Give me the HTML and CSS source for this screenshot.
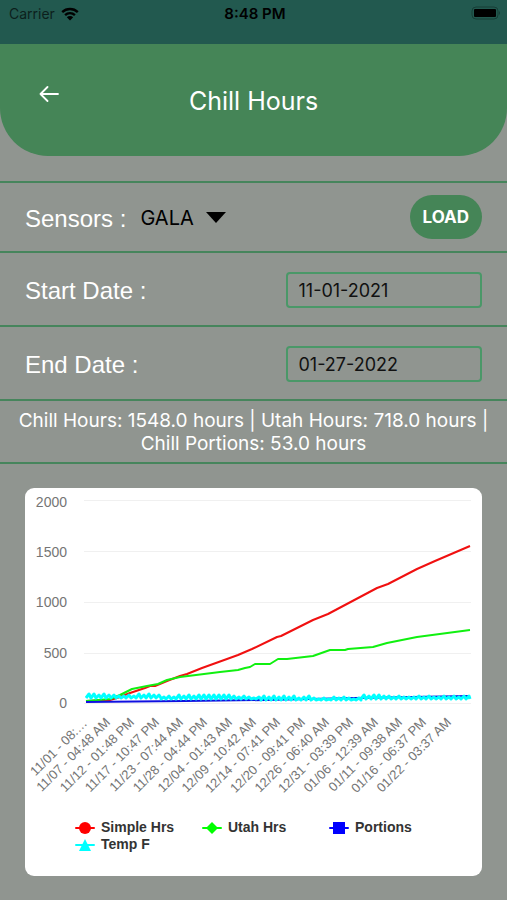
FILE: index.html
```html
<!DOCTYPE html>
<html lang="en">
<head>
<meta charset="utf-8">
<meta name="viewport" content="width=device-width, initial-scale=1">
<title>Chill Hours</title>
<link rel="stylesheet" href="styles.css">
</head>
<body>
<div class="status">
  <div class="status-left">
    <span>Carrier</span>
    <svg class="wifi" viewBox="0 0 18 14" aria-hidden="true">
      <path d="M1.2 5.1a11.3 11.3 0 0 1 15.6 0M4.1 8.1a7.1 7.1 0 0 1 9.8 0" fill="none" stroke="#000" stroke-width="2.4"/>
      <path d="M5.8 10.2a4.6 4.6 0 0 1 6.4 0L9 13.4z"/>
    </svg>
  </div>
  <strong class="status-time">8:48 PM</strong>
  <svg class="battery" viewBox="0 0 30 14" aria-hidden="true">
    <rect x="1" y="1" width="26" height="12" rx="4" fill="none" stroke="#163e37"/>
    <rect x="3" y="3" width="22" height="8" rx="1"/>
    <path d="M28 5q2 2 0 4z" fill="#163e37"/>
  </svg>
</div>
<header class="header">
  <button class="back" type="button" aria-label="Back">
    <svg viewBox="0 0 20 16" aria-hidden="true"><path d="M19 8H1.5M8.5 1 1.5 8l7 7" fill="none" stroke="#fff" stroke-width="1.8" stroke-linecap="round" stroke-linejoin="round"/></svg>
  </button>
  <h1>Chill Hours</h1>
</header>
<main>
  <form class="filters">
    <div class="row row-sensor">
      <label for="sensor">Sensors :</label>
      <div class="picker">
        <select id="sensor"><option>GALA</option></select>
        <svg class="caret" viewBox="0 0 20 11" aria-hidden="true"><path d="M0 0h20L10 11z"/></svg>
      </div>
      <button class="load" type="button">LOAD</button>
    </div>
    <div class="row">
      <label for="start">Start Date :</label>
      <input id="start" type="text" value="11-01-2021">
    </div>
    <div class="row">
      <label for="end">End Date :</label>
      <input id="end" type="text" value="01-27-2022">
    </div>
  </form>
  <p class="summary">Chill Hours: 1548.0 hours | Utah Hours: 718.0 hours | Chill Portions: 53.0 hours</p>
  <section class="card">
    <svg class="chart" viewBox="0 0 457 331" role="img" aria-label="Chill accumulation">
      <path class="grid" d="M59 12.5H446M59 63.5H446M59 114.5H446M59 165.5H446M59 215.5H446"/>
      <g class="y-labels">
        <text x="42" y="19">2000</text>
        <text x="42" y="69">1500</text>
        <text x="42" y="119">1000</text>
        <text x="42" y="170">500</text>
        <text x="42" y="220">0</text>
      </g>
      <g class="x-labels">
        <text transform="translate(63 236) rotate(-45)">11/01 - 08:…</text>
        <text transform="translate(86 235) rotate(-45)">11/07 - 04:48 AM</text>
        <text transform="translate(110 235) rotate(-45)">11/12 - 01:48 PM</text>
        <text transform="translate(135 235) rotate(-45)">11/17 - 10:47 PM</text>
        <text transform="translate(159 235) rotate(-45)">11/23 - 07:44 AM</text>
        <text transform="translate(183 235) rotate(-45)">11/28 - 04:44 PM</text>
        <text transform="translate(208 235) rotate(-45)">12/04 - 01:43 AM</text>
        <text transform="translate(232 235) rotate(-45)">12/09 - 10:42 AM</text>
        <text transform="translate(256 235) rotate(-45)">12/14 - 07:41 PM</text>
        <text transform="translate(281 235) rotate(-45)">12/20 - 09:41 PM</text>
        <text transform="translate(305 235) rotate(-45)">12/26 - 06:40 AM</text>
        <text transform="translate(329 235) rotate(-45)">12/31 - 03:39 PM</text>
        <text transform="translate(354 235) rotate(-45)">01/06 - 12:39 AM</text>
        <text transform="translate(378 235) rotate(-45)">01/11 - 09:38 AM</text>
        <text transform="translate(402 235) rotate(-45)">01/16 - 06:37 PM</text>
        <text transform="translate(427 235) rotate(-45)">01/22 - 03:37 AM</text>
      </g>
      <polyline class="line simple" points="61,213 85,212 92,210 105,205 120,200 125,198 130,198 142,193 155,188 162,186 177,180 202,171 213,167 220,164 227,161 252,149 256,148 288,132 303,126 352,100 363,96 392,81 410,73 445,58"/>
      <polyline class="line utah" points="61,213 85,211 95,207 107,201 122,198 133,196 142,192 155,189 195,184 213,182 220,180 225,179 230,176 245,176 253,171 262,171 288,168 305,162 320,162 323,161 348,159 362,155 392,149 445,142"/>
      <polyline class="line portions" points="61,214 160,213 240,212 330,210 445,208"/>
      <path class="line temp" d="M61 210
        l3-4 2 4 3-4 2 4 3-3 2 3 3-4 2 4 3-3 2 3
        l3-3 2 3 3-2 2 2 3-2 2 2 3-3 2 3 3-2 2 2
        l3-4 2 4 3-3 2 3 3-4 2 4 3-3 2 3 3-3 2 3
        L136 211
        l3-2 2 2 3-3 2 3 3-2 2 2 3-4 2 4 3-3 2 3
        l3-4 2 4 3-3 2 3 3-4 2 4 3-4 2 4 3-4 2 4
        l3-4 2 4 3-4 2 4 3-4 2 4 3-4 2 4 3-3 2 3
        l3-2 2 2 3-3 2 3 3-2 2 2 3-1 2 1 3-2 2 2
        L236 212
        l3-4 2 4 3-3 2 3 3-4 2 4 3-3 2 3 3-4 2 4
        l3-3 2 3 3-4 2 4 3-2 2 2 3-3 2 3 3-4 2 4
        l3-2 2 2 3-1 2 1 3-2 2 2 3-1 2 1 3-3 2 3
        l3-2 2 2 3-3 2 3 3-2 2 2 3-1 2 1 3-2 2 2
        L336 211
        l3-4 2 4 3-3 2 3 3-4 2 4 3-4 2 4 3-3 2 3
        l3-3 2 3 3-2 2 2 3-3 2 3 3-2 2 2 3-2 2 2
        l3-2 2 2 3-3 2 3 3-2 2 2 3-3 2 3 3-2 2 2
        l3-2 2 2 3-3 2 3 3-2 2 2 3-3 2 3 3-2 2 2
        l3-3 2 3 3-3 1 3"/>
    </svg>
    <ul class="legend">
      <li><svg viewBox="0 0 20 14" aria-hidden="true"><path d="M1 7h18" stroke="#f00" stroke-width="2" stroke-linecap="round"/><circle cx="10" cy="7" r="6" fill="#f00"/></svg>Simple Hrs</li>
      <li><svg viewBox="0 0 20 14" aria-hidden="true"><path d="M1 7h18" stroke="#0f0" stroke-width="2" stroke-linecap="round"/><path d="m10 1 6 6-6 6-6-6z" fill="#0f0"/></svg>Utah Hrs</li>
      <li><svg viewBox="0 0 20 14" aria-hidden="true"><path d="M1 7h18" stroke="#00f" stroke-width="2" stroke-linecap="round"/><path d="M4 1h12v12H4z" fill="#00f"/></svg>Portions</li>
      <li><svg viewBox="0 0 20 14" aria-hidden="true"><path d="M1 7h18" stroke="#0ff" stroke-width="2" stroke-linecap="round"/><path d="m10 1 6 12H4z" fill="#0ff"/></svg>Temp F</li>
    </ul>
  </section>
</main>
</body>
</html>
```
FILE: styles.css
```css
* {
  box-sizing: border-box;
}

body {
  margin: 0;
  min-height: 100vh;
  background: #909590;
  font-family: Inter, "Liberation Sans", sans-serif;
}

.status {
  display: grid;
  grid-template-columns: 1fr auto 1fr;
  align-items: start;
  height: 44px;
  padding: 4px 6px 0 9px;
  background: #22594f;
  color: #0c1f1c;
  font-size: 14px;
  line-height: 20px;
}

.status-left {
  display: flex;
  align-items: center;
  gap: 6px;
}

.wifi {
  width: 18px;
  height: 14px;
}

.status-time {
  font-size: 15px;
  font-weight: 600;
  color: #000;
}

.battery {
  justify-self: end;
  width: 30px;
  height: 14px;
  margin-top: 2px;
}

.header {
  display: grid;
  grid-template-columns: 80px 1fr 80px;
  align-items: center;
  height: 112px;
  background: #458557;
  border-radius: 0 0 48px 48px;
  color: #fff;
}

.back {
  justify-self: center;
  display: grid;
  place-items: center;
  width: 40px;
  height: 40px;
  margin: 0 0 12px 18px;
  padding: 0;
  border: 0;
  background: none;
}

.back svg {
  width: 20px;
  height: 16px;
}

h1 {
  margin: 0;
  padding-top: 2px;
  font-size: 25px;
  font-weight: 400;
  line-height: 32px;
  text-align: center;
}

.filters {
  margin-top: 25px;
  border-top: 2px solid #46855c;
}

.row {
  display: flex;
  align-items: center;
  justify-content: space-between;
  min-height: 74px;
  padding: 0 25px;
  border-bottom: 2px solid #46855c;
}

.row-sensor {
  justify-content: flex-start;
  min-height: 70px;
}

label {
  padding-top: 3px;
  color: #fff;
  font-family: "Liberation Sans", sans-serif;
  font-size: 24px;
}

.picker {
  position: relative;
  margin-left: 14px;
}

select {
  appearance: none;
  padding: 2px 32px 0 0;
  border: 0;
  background: none;
  color: #000;
  font: 20px/28px Inter, "Liberation Sans", sans-serif;
}

.caret {
  position: absolute;
  right: 0;
  top: 10px;
  width: 20px;
  height: 11px;
  pointer-events: none;
}

.load {
  height: 44px;
  margin-left: auto;
  padding: 0 13px;
  border: 0;
  border-radius: 22px;
  background: #458557;
  color: #fff;
  font: 700 17px/44px Inter, "Liberation Sans", sans-serif;
}

input {
  width: 43%;
  height: 36px;
  margin-top: 2px;
  padding: 0 11px;
  border: 2px solid #4a9868;
  border-radius: 4px;
  background: none;
  color: #111;
  font: 18px/32px Inter, "Liberation Sans", sans-serif;
}

.summary {
  margin: 0;
  padding: 8px 16px 7px;
  border-bottom: 2px solid #46855c;
  color: #fff;
  font-size: 19px;
  line-height: 23px;
  text-align: center;
}

.card {
  margin: 24px 25px;
  padding-bottom: 23px;
  border-radius: 9px;
  background: #fff;
  font-family: "Liberation Sans", sans-serif;
}

.chart {
  display: block;
  width: 100%;
}

.grid {
  stroke: #f0f0f0;
}

.y-labels,
.x-labels {
  fill: #757575;
  text-anchor: end;
}

.y-labels {
  font-size: 14px;
}

.x-labels {
  font-size: 13px;
}

.line {
  fill: none;
  stroke-width: 2;
  stroke-linejoin: round;
}

.simple {
  stroke: #f01010;
}

.utah {
  stroke: #10f010;
}

.portions {
  stroke: #1010e0;
}

.temp {
  stroke: #0ff;
  stroke-width: 3;
}

.legend {
  display: grid;
  grid-template-columns: repeat(3, 1fr);
  margin: 0;
  padding: 0 26px 0 50px;
  color: #333;
  font-size: 14px;
  font-weight: 700;
  line-height: 17px;
  list-style: none;
}

.legend li {
  display: flex;
  align-items: center;
  gap: 6px;
}

.legend svg {
  width: 20px;
  height: 14px;
}
```
